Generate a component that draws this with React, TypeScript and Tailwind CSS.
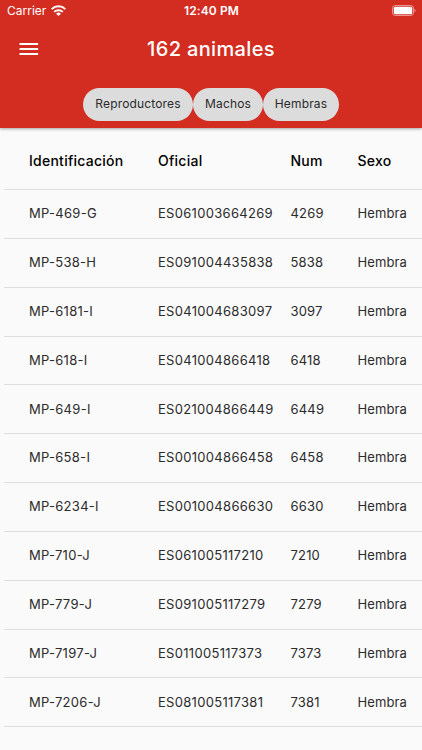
const rows = [
  ['MP-469-G', 'ES061003664269', '4269'],
  ['MP-538-H', 'ES091004435838', '5838'],
  ['MP-6181-I', 'ES041004683097', '3097'],
  ['MP-618-I', 'ES041004866418', '6418'],
  ['MP-649-I', 'ES021004866449', '6449'],
  ['MP-658-I', 'ES001004866458', '6458'],
  ['MP-6234-I', 'ES001004866630', '6630'],
  ['MP-710-J', 'ES061005117210', '7210'],
  ['MP-779-J', 'ES091005117279', '7279'],
  ['MP-7197-J', 'ES011005117373', '7373'],
  ['MP-7206-J', 'ES081005117381', '7381'],
];

export default function App() {
  return (
    <div className="flex h-[750px] w-[422px] flex-col overflow-hidden bg-[#fafafa] font-['Inter',sans-serif] text-[#2b2b2b]">
      <header className="z-10 flex h-32 shrink-0 flex-col bg-[#d32d22] text-white shadow-[0_1px_3px_rgba(0,0,0,0.35)]">
        <div className="grid h-[22px] grid-cols-[1fr_auto_1fr] items-center pl-[7px] pr-[6px] text-[12px]">
          <div className="flex items-center gap-[5px]">
            <span>Carrier</span>
            <svg className="-mt-px" width="15" height="11" viewBox="0 0 15 11" fill="none" stroke="white" strokeWidth="2">
              <path d="M.7 4.1a9.7 9.7 0 0 1 13.6 0M3.2 6.9a6.1 6.1 0 0 1 8.6 0" />
              <path d="M5.1 8.8a3.4 3.4 0 0 1 4.8 0L7.5 11z" fill="white" stroke="none" />
            </svg>
          </div>
          <span className="text-center font-semibold tracking-[0.12px]">12:40 PM</span>
          <svg className="-mt-px justify-self-end" width="24" height="11" viewBox="0 0 24 11">
            <rect x=".5" y=".5" width="21" height="10" rx="2.8" fill="none" stroke="#fff" strokeOpacity=".5" />
            <rect x="1.8" y="1.8" width="18.4" height="7.4" rx="1.5" fill="#fff" />
            <path d="M22.5 3.7v3.6q2.2-1.8 0-3.6" fill="#fff" fillOpacity=".6" />
          </svg>
        </div>
        <div className="grid h-[54px] grid-cols-[60px_1fr_60px] items-center">
          <svg className="ml-[19px]" width="20" height="14" viewBox="0 0 20 14" fill="white">
            <path d="M.5 1h18.6v2H.5zM.5 6h18.6v2H.5zM.5 11h18.6v2H.5z" />
          </svg>
          <h1 className="text-center text-[20px] font-medium tracking-[0.35px]">162 animales</h1>
        </div>
        <div className="mt-3 flex justify-center text-[12px] tracking-[0.15px] text-[#2b2b2b]">
          <span className="flex h-[32.5px] w-[110px] items-center justify-center rounded-full bg-[#dcdcdc]">Reproductores</span>
          <span className="flex h-[32.5px] w-[70px] items-center justify-center rounded-full bg-[#dcdcdc]">Machos</span>
          <span className="flex h-[32.5px] w-[76px] items-center justify-center rounded-full bg-[#dcdcdc]">Hembras</span>
        </div>
      </header>
      <main className="ml-1 mt-1 text-[13px]">
        <div className="grid h-[58px] grid-cols-[129px_132.5px_67px_1fr] items-center border-b border-[#dedede] pl-[25px] text-[14px] font-medium tracking-[0.25px] text-black">
          <span>Identificación</span><span>Oficial</span><span>Num</span><span>Sexo</span>
        </div>
        {rows.map(([id, official, num]) => (
          <div key={id} className="grid h-[48.85px] grid-cols-[129px_132.5px_67px_1fr] items-center border-b border-[#dedede] pl-[25px]">
            <span className="tracking-[0.28px]">{id}</span>
            <span className="tracking-[0.3px]">{official}</span>
            <span className="tracking-[0.18px]">{num}</span>
            <span className="tracking-[0.12px]">Hembra</span>
          </div>
        ))}
      </main>
    </div>
  );
}
